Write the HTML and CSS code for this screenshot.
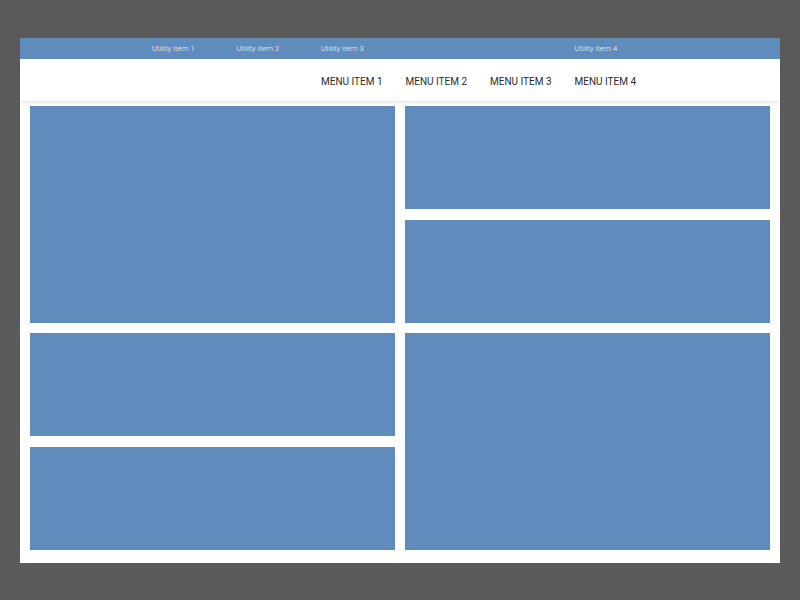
FILE: index.html
```html
<!DOCTYPE html>
<html>
<head>
<meta charset="utf-8">
<link rel="stylesheet" href="styles.css">
</head>
<body>
<div class="frame">
  <div class="utility">
    <span class="u-item">Utility item 1</span>
    <span class="u-item">Utility item 2</span>
    <span class="u-item">Utility item 3</span>
    <span class="u-item u-spacer"></span>
    <span class="u-item u-spacer"></span>
    <span class="u-item">Utility item 4</span>
  </div>
  <div class="menu">
    <span class="m-item">MENU ITEM 1</span>
    <span class="m-item">MENU ITEM 2</span>
    <span class="m-item">MENU ITEM 3</span>
    <span class="m-item">MENU ITEM 4</span>
  </div>
  <div class="grid">
    <div class="box big-left"></div>
    <div class="box r1"></div>
    <div class="box r2"></div>
    <div class="box l3"></div>
    <div class="box big-right"></div>
    <div class="box l4"></div>
  </div>
</div>
</body>
</html>
```
FILE: styles.css
```css
html, body {
  margin: 0;
  padding: 0;
  background: #5a5a5a;
  width: 800px;
  height: 600px;
  overflow: hidden;
  font-family: Roboto, "Liberation Sans", sans-serif;
}
.frame {
  margin: 38px 0 0 20px;
  width: 760px;
  height: 525px;
  background: #ffffff;
  display: flex;
  flex-direction: column;
}
.utility {
  height: 21px;
  background: #5f8bbd;
  display: flex;
  align-items: center;
  padding-left: 132px;
  color: #ffffff;
  font-size: 7.6px;
  font-weight: 300;
  letter-spacing: 0.1px;
  position: relative;
  z-index: 2;
}
.u-item {
  width: 84.5px;
  flex: none;
}
.menu {
  height: 42px;
  background: #ffffff;
  display: flex;
  align-items: center;
  padding-left: 301px;
  color: #2a2a2a;
  font-size: 10px;
  box-shadow: 0 2px 3px rgba(0, 0, 0, 0.09);
  position: relative;
  z-index: 1;
}
.m-item {
  width: 84.5px;
  flex: none;
  padding-top: 2px;
}
.grid {
  flex: 1;
  padding: 5px 10px 13px 10px;
  display: grid;
  grid-template-columns: 1fr 1fr;
  grid-template-rows: repeat(4, 1fr);
  gap: 10.5px 10px;
}
.box {
  background: #5f8bbd;
}
.big-left { grid-column: 1; grid-row: 1 / 3; }
.r1 { grid-column: 2; grid-row: 1; }
.r2 { grid-column: 2; grid-row: 2; }
.l3 { grid-column: 1; grid-row: 3; }
.big-right { grid-column: 2; grid-row: 3 / 5; }
.l4 { grid-column: 1; grid-row: 4; }
```
